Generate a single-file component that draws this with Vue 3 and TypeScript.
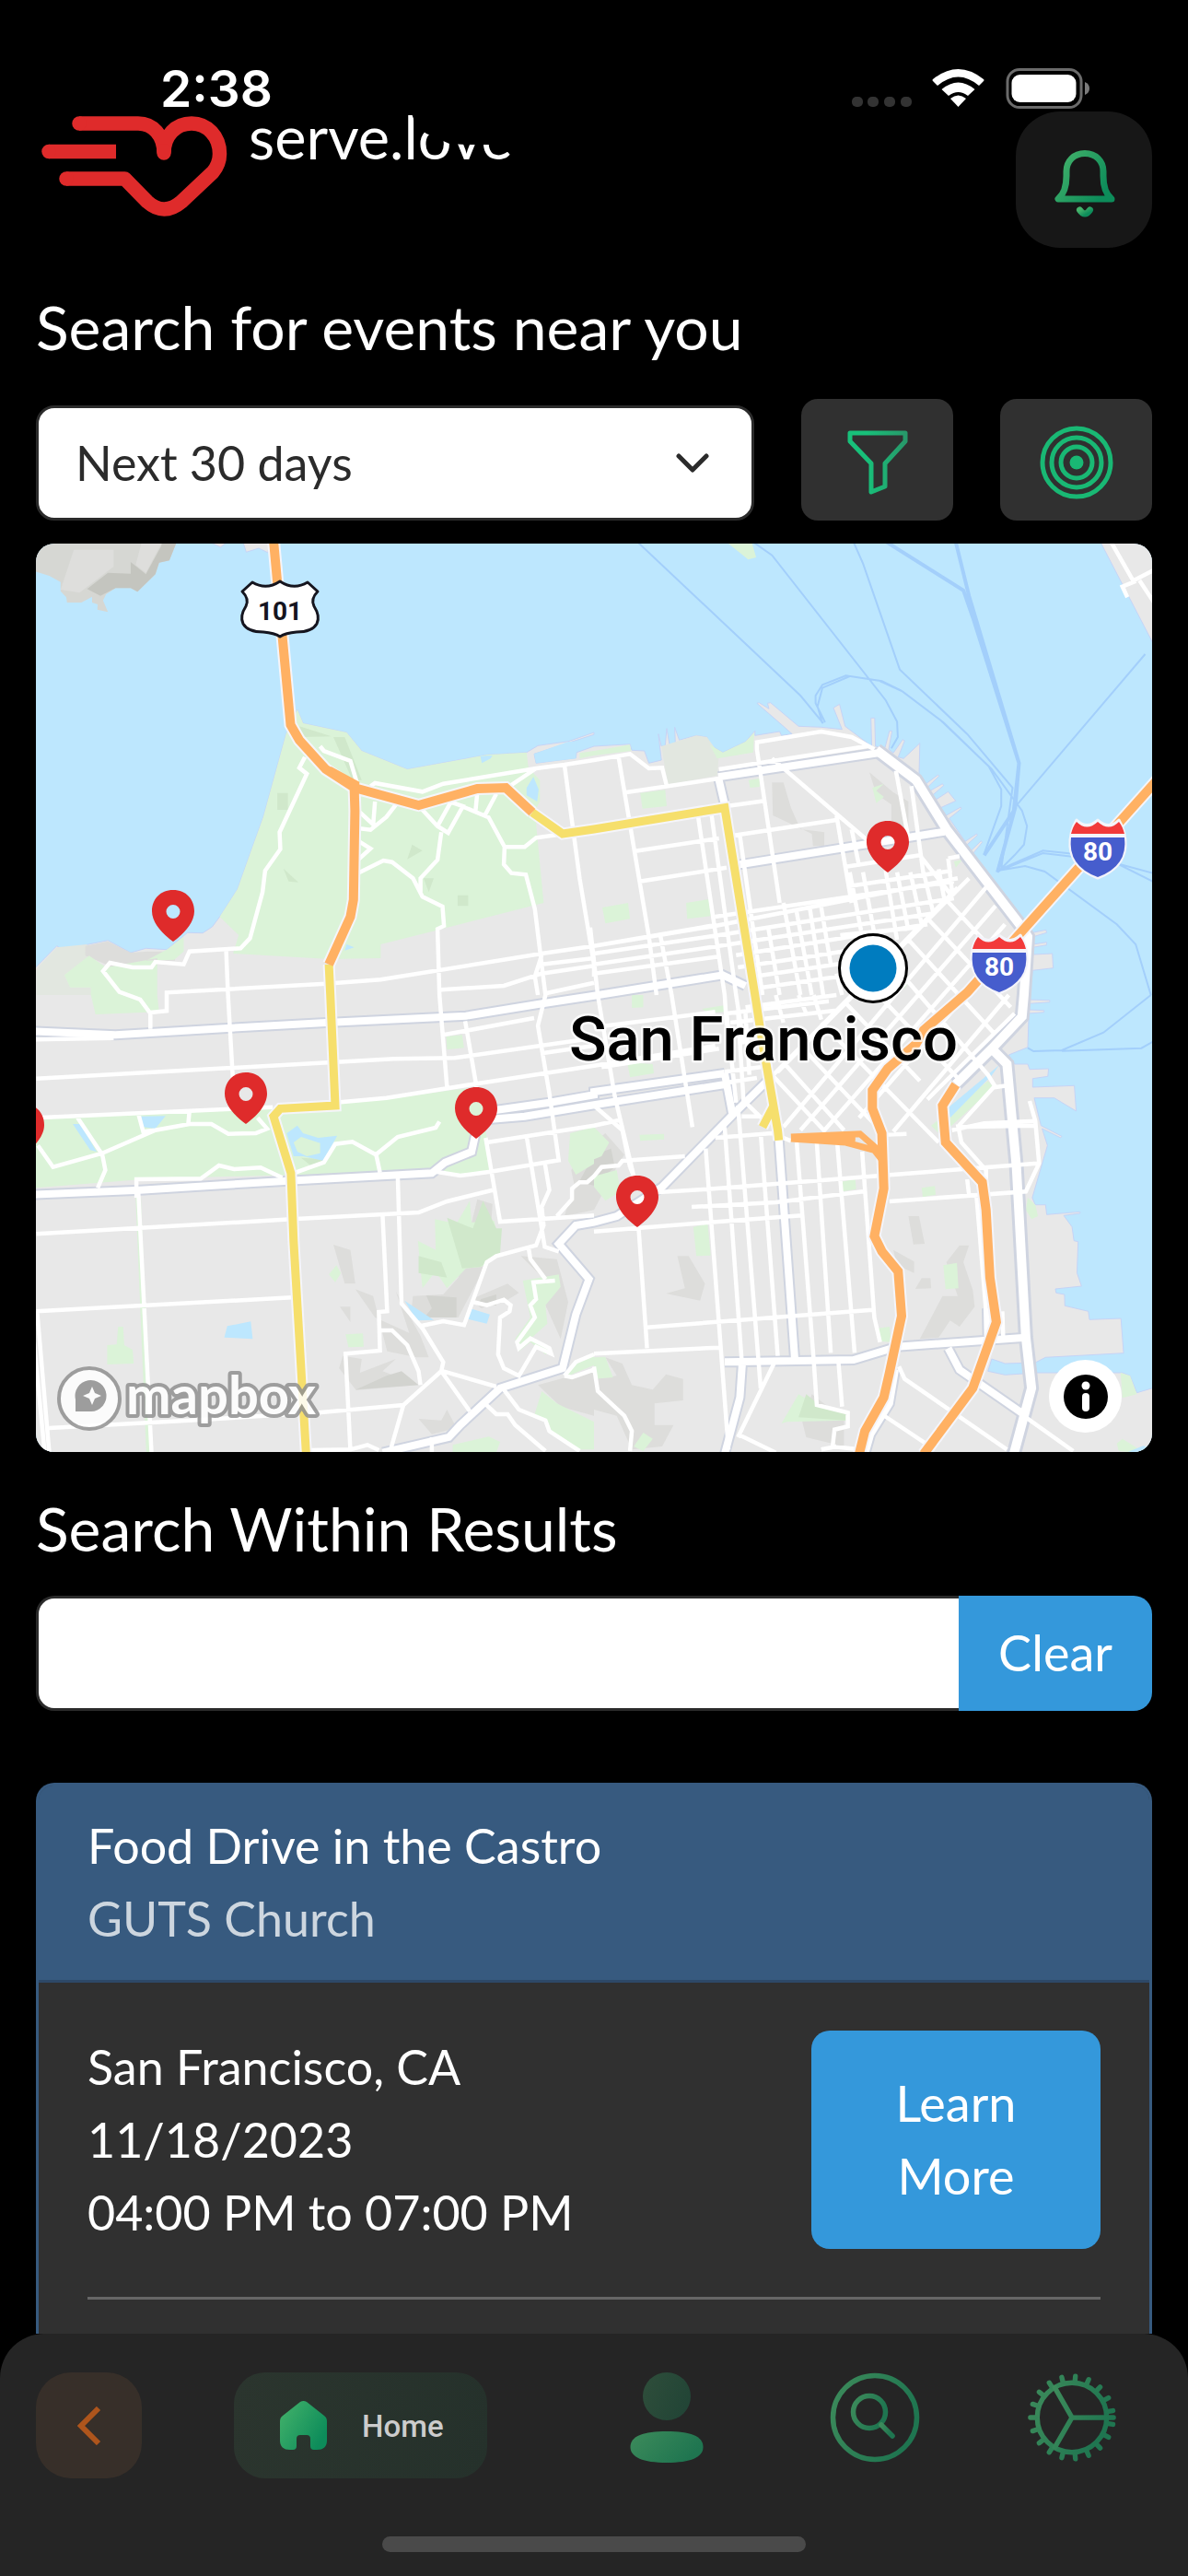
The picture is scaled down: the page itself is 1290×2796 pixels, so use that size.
<script setup lang="ts">
import { ref } from 'vue'

type Sheet = 'nw' | 'ne' | 'sw' | 'se'

// The street data is kept on four survey sheets; each has its own origin.
const sheetOrigin: Record<Sheet, [number, number]> = {
  nw: [0, 0],
  ne: [1568, 0],
  sw: [0, 1500],
  se: [1568, 1500],
}

function trace(data: string): string {
  let origin = sheetOrigin.nw
  const points: string[] = []
  for (const token of data.split(' ')) {
    if (token in sheetOrigin) {
      origin = sheetOrigin[token as Sheet]
      continue
    }
    const [x, y] = token.split(',').map(Number)
    const px = Math.round((x + origin[0]) * 4.1135 - 390) / 10
    const py = Math.round((y + origin[1]) * 3.3333 - 100) / 10
    points.push(`${px} ${py}`)
  }
  return 'M' + points.join('L')
}

const lines = (items: string[]): string => items.map(trace).join('')
const areas = (items: string[]): string => items.map((i) => trace(i) + 'Z').join('')

const land = areas([
  'nw 90,1415 150,1340 165,1352 285,1322 345,1362 385,1348 440,1352 495,1297 535,1298 560,1278 580,1245 627,1155 660,1040 695,920 755,650 785,570 800,615 915,645 955,705 1075,765 1285,718 1390,710 1420,688 1500,674 1568,645 1568,652 1410,715 1415,745 1520,728 1522,710 ne 0,690 95,683 100,703 133,705 145,745 178,735 170,650 178,690 188,688 192,632 200,690 215,687 213,628 225,670 270,655 298,660 305,685 340,710 400,675 425,640 425,655 490,642 495,655 523,650 500,625 430,550 436,548 462,568 458,550 466,548 540,625 600,628 655,635 632,565 648,553 663,625 733,690 731,598 741,598 743,690 768,695 780,640 787,640 778,700 790,712 815,668 820,672 803,725 817,730 860,680 858,795 868,820 908,783 911,787 875,830 880,840 920,812 923,818 888,855 905,862 935,838 955,868 915,890 930,915 968,888 970,893 938,925 980,1000 1010,975 1012,980 985,1010 995,1030 1022,998 1025,1003 1000,1040 1140,1270 1145,1300 1193,1288 1195,1297 1155,1312 1158,1335 1195,1328 1195,1337 1158,1345 1160,1368 1210,1365 1212,1412 1158,1420 1150,1500 se 1150,15 1203,17 1203,23 1150,28 1150,48 1188,50 1188,56 1148,60 1145,170 1095,195 1110,225 1145,225 1150,242 1200,240 1198,265 1158,272 1158,300 1268,295 1273,378 1215,335 1162,335 1180,425 1235,460 1232,465 1183,435 1197,490 1157,660 1165,683 1192,683 1195,715 1283,706 1283,711 1240,718 1262,755 1267,800 1278,803 1275,905 1287,948 1218,957 1220,970 1242,975 1243,1012 1305,1030 1308,1057 1391,1053 1398,1166 1192,1180 1165,1197 1085,1200 1050,1185 1040,1225 1085,1237 1170,1230 1395,1230 1415,1240 1433,1295 1480,1278 1480,1500 sw 90,1500',
  'ne 1335,20 1480,20 1480,365',
  'nw 640,20 710,20 708,60 683,45 650,58',
  'nw 545,20 605,20 582,42',
])
const headland = areas([
  'nw 90,20 468,20 447,85 420,92 410,130 363,187 345,175 305,175 280,195 272,215 285,253 257,245 258,228 243,222 243,203 215,222 177,222 175,205 160,185 160,155 130,135 90,120',
])
const headlandLight = areas(['nw 195,50 300,50 300,105 210,190 160,180', 'nw 375,20 430,20 385,125 358,100'])
const headlandDark = areas([
  'nw 285,125 345,128 345,90 385,130 425,40 430,20 468,20 447,85 420,92 410,130 363,187 345,175 305,175 265,200 230,178',
])
const coastShade = areas([
  'nw 96,1415 150,1345 230,1335 230,1380 170,1435 185,1475 240,1475 245,1500 96,1500',
  'ne 178,690 270,655 298,660 330,715 325,785 195,815',
])
const parks = areas([
  'nw 755,650 785,570 800,615 915,645 955,705 1075,765 1285,718 1390,710 1395,760 1425,800 1425,870 1412,900 1435,1200 1150,1290 1005,1335 1005,1380 870,1383 615,1365 630,1305 580,1245 627,1155 660,1040 695,920',
  'nw 170,1435 235,1372 280,1410 415,1380 415,1500 sw 420,55 252,63 nw 240,1500 240,1475 185,1475',
  'nw 385,1388 460,1385 485,1358 485,1310 440,1352',
  'sw 90,400 500,378 720,365 885,350 1020,340 1200,308 1270,300 1285,470 1295,570 1215,585 1150,575 1000,578 400,598 90,628',
  'nw 1530,712 1568,705 ne 95,685 98,705 0,720 nw 1530,730',
  'ne 305,685 340,710 400,675 423,645 420,710 325,730',
  'ne 122,842 188,832 192,885 128,893',
  'ne 22,1215 90,1200 95,1252 30,1267',
  'ne 243,1200 303,1188 308,1243 246,1252',
  'ne 408,800 437,795 437,822 412,825',
  'ne 735,825 765,812 745,835 765,855 745,875',
  'ne 345,20 415,20 428,75 407,82',
  'ne 950,1065 972,1060 955,1085',
  'ne 790,1440 840,1440 820,1480',
  'sw 1178,135 1220,130 1225,172 1180,178',
  'sw 1505,450 1568,430 1568,550 1520,585 1500,540',
  'sw 358,660 372,660 400,1490 386,1490',
  'sw 283,1140 308,1138 312,1080 325,1080 328,1140 350,1155 353,1200 283,1203',
  'sw 868,910 888,880 900,905 885,935',
  'sw 912,1105 958,1102 960,1145 920,1147',
  'sw 1148,730 1205,745 1240,670 1245,740 1305,735 1318,850 1270,885 1230,890 1180,955 1150,900 1115,955 1103,800 1150,830',
  'sw 1380,930 1475,910 1480,950 1440,1010 1445,1070 1400,1120 1460,1160 1440,1170 1400,1130 1370,1160 1360,1120 1400,1050',
  'sw 1410,1370 1430,1290 1470,1330 1568,1390 1568,1480 1530,1480 1450,1420 1440,1380',
  'sw 1490,1245 1520,1200 1568,1170 1568,1205',
  'sw 1195,1465 1290,1438 1320,1455 1310,1490 1195,1490',
  'se 0,430 40,480 20,525 -40,555',
  'se 0,590 60,570 70,640 30,670 0,625',
  'se 262,755 300,745 308,848 270,850',
  'se 652,608 690,600 692,632 655,640',
  'se 865,628 900,622 902,650 868,658',
  'se 922,880 958,872 962,955 928,958',
  'se 1145,660 1165,683 1172,720 1155,730 1140,700',
  'se 750,1085 780,1080 785,1130 758,1128',
  'se 495,1395 540,1300 580,1330 665,1360 665,1385 510,1390',
  'se 0,1180 30,1178 50,1245 0,1250',
  'se 105,1470 130,1425 155,1445 130,1485',
  'se 1390,1230 1415,1240 1433,1300 1395,1312',
  'se 1380,1460 1395,1445 1440,1480 1430,1490 1385,1485',
  'se 120,455 185,452 185,470 122,475',
  'se 88,220 155,225 158,255 95,268',
  'se 100,0 130,0 130,40 100,42',
  'se 285,45 350,32 350,55 300,58',
  'se 890,425 1040,280 1055,300 940,430 910,450',
])
const parkShade = areas([
  'nw 790,625 875,658 800,660',
  'nw 880,660 910,660 955,800 930,800',
  'nw 732,842 760,842 760,897 732,897',
  'nw 1088,1010 1115,1030 1075,1058',
  'nw 748,1088 788,1133 762,1130',
  'nw 1118,1120 1145,1120 1132,1165',
  'nw 1208,1175 1236,1175 1236,1210 1208,1210',
  'sw 1180,725 1248,760 1275,670 1310,760 1325,760 1320,840 1268,885 1220,890',
  'sw 1105,850 1165,870 1180,920 1105,905',
  'sw 795,530 865,535 820,555',
  'se 540,1375 560,1300 590,1330 665,1360 665,1385',
])
const hillShade = areas([
  'sw 1260,665 1300,680 1290,860 1210,1050 1085,1040 1090,980 1170,975 1210,920',
  'sw 880,813 925,830 938,940 910,940',
  'sw 938,958 985,980 1022,1160 1100,1180 1132,1180 1110,1110 1045,965 1080,1100 990,1050',
  'sw 897,1015 925,1015 925,1065',
  'sw 905,1175 955,1185 950,1230 1045,1185 1010,1225 1105,1270 940,1287 895,1215',
  'sw 1245,990 1340,940 1370,970 1330,1000 1270,1020',
  'sw 1375,850 1470,860 1500,1000 1480,1120 1440,1010 1440,930',
  'sw 1490,720 1510,640 1568,600 1568,700',
  'sw 1105,1380 1165,1385 1180,1350 1205,1410 1140,1430',
  'sw 1420,1270 1568,1220 1568,1370 1480,1340',
  'se -60,570 0,480 30,450 80,520 60,560 0,700 -40,690',
  'se 220,850 250,850 293,940 280,995 190,972 240,955',
  'se 830,720 858,720 873,810 843,812',
  'se 790,830 845,868 845,905 800,880',
  'se 865,922 888,922 890,955 848,957',
  'se 860,1120 920,980 960,980 930,870 965,815 990,815 975,870 1000,960 1005,1015 965,1080 940,1060 910,1115',
  'se 30,1180 75,1200 100,1270 155,1285 190,1235 235,1250 235,1320 160,1330 160,1400 210,1400 180,1470 100,1480 60,1370 0,1350 0,1250 60,1240',
  'se 550,1390 575,1300 660,1380 660,1470 560,1440',
  'ne 470,808 500,808 520,890 545,960 608,970 608,1015 578,1015 575,975 472,915',
  'ne 727,775 790,840 830,870 830,990 785,945 785,880 745,845',
  'nw 225,1340 285,1325 345,1362 390,1358 462,1358 462,1388 390,1388 330,1430 280,1400 225,1372',
])
const hillShadeDark = areas([
  'sw 1125,978 1205,985 1205,1050 1120,1050 1140,1020',
  'sw 1020,1240 1060,1225 1105,1270 940,1285',
  'sw 1270,990 1310,975 1310,1010 1260,1010',
  'se 0,520 45,500 55,560 0,620 -40,610',
])
const ponds = areas([
  'sw 372,395 437,394 410,435 378,430',
  'sw 192,420 212,420 255,510 238,505',
  'sw 757,450 785,425 800,450 840,465 890,458 855,540 800,525 775,525',
  'sw 600,1078 662,1063 667,1120 592,1115',
  'sw 1068,995 1145,1058 1100,1060',
  'sw 1240,1020 1293,1040 1285,1070 1235,1055',
  'nw 1408,790 1422,830 1418,870 1390,850 1390,825',
  'nw 915,1335 935,1345 910,1355',
  'nw 1410,715 1500,675 1520,675 1520,730 1415,745',
  'nw 1268,722 1300,720 1295,730 1272,745',
  'se 1070,228 932,370 940,400 1050,262',
  'se 1410,1487 1450,1468 1480,1480 1480,1495',
])
const pondIsland = areas(['sw 775,480 795,462 845,482 845,515 810,525 785,510'])

const ferries = lines([
  'ne 115,25 545,525 605,615',
  'ne 420,25 470,68 770,540 800,610 802,660 785,697',
  'ne 685,25 710,95 807,440 985,650 1105,825 1075,1090',
  'ne 610,612 585,550 585,525 603,490 665,460 760,478 810,508 915,605 1042,755 1075,830 1075,885 1030,1040',
  'ne 603,615 590,560 603,500 675,462',
  'ne 755,478 815,512 922,612 1050,765 1130,900 1143,950 1135,1010 1110,1045 1065,1100',
  'ne 1455,390 1110,890 1065,1095',
  'ne 1065,1095 1185,1030 1300,1045 1480,1105',
  'ne 1070,1095 1185,1038 1370,1065 1480,1133',
  'ne 1065,1095 1138,1080 1190,1098 1380,1270 1430,1335 1470,1500',
  'se 1470,0 1345,122 1235,180 1160,183 1145,172',
  'se 1235,182 1445,173 1475,152',
])
const ferriesWide = lines([
  'ne 772,25 975,182 1000,270 1122,745 1108,900 1030,1045',
  'ne 955,25 990,200 1122,745 1112,890 1065,1100',
])

const streets = lines([
  // Treasure Island
  'ne 1365,25 1425,155 1395,170 1408,205', 'ne 1425,150 1480,115', 'ne 1440,150 1480,225',
  // Presidio and the Richmond
  'nw 845,690 855,705 925,738 945,820', 'nw 805,725 790,760 810,780 738,970 740,1025 700,1095 693,1165 660,1315 635,1348 500,1358 485,1400 410,1392 400,1410 350,1410 290,1395 272,1422 315,1490 sw 370,15 397,60 397,110',
  'nw 978,820 990,810 1115,838 1170,812 1415,762 1490,750 1568,735 ne 95,715 145,762 180,760 192,820',
  'nw 1345,820 1415,762', 'nw 990,870 985,945 950,905', 'nw 1045,880 1020,920 978,962 950,958', 'nw 948,1000 978,1023 945,1060',
  'nw 1110,890 1155,950 1183,972 1222,885 1190,872 1155,950', 'nw 1190,870 1290,922 1332,1018 1330,1075 1350,1103 1388,1108 1412,1220 1440,1500 sw 1420,100 1450,320 1475,538 1295,575 1215,588 1150,575',
  'nw 1260,840 1255,905', 'nw 1310,845 1280,915', 'nw 1332,1018 1385,1018 1415,988 1490,975',
  'nw 945,1103 1012,1062 1035,1067 1090,1120 1115,1180 1168,1212 1172,1275 1155,1285 1160,1500 sw 1180,300',
  'nw 1165,970 1155,1060 1110,1120 1110,1165',
  'nw 1490,750 1530,1120 1568,1400 sw 1568,-60', 'nw 597,1358 602,1500 sw 615,280',
  'sw 397,57 440,52 nw 440,1492 860,1463 1005,1450 1430,1365 1568,1340 ne 320,1275 960,1120',
  'nw 1165,1483 1330,1470 1430,1430 1568,1405', 'nw 1430,1400 1568,1380', 'nw 1430,1370 1412,1440 1420,1500', 'nw 1440,1495 1568,1460',
  'sw 90,145 300,140', 'sw 96,272 600,238 1040,208 1200,205 1568,140', 'sw 1170,130 1410,75', 'sw 1228,85 1258,300', 'sw 1430,190 1568,165',
  'sw 96,400 720,365', 'sw 885,350 1020,335 1250,290 1568,230 se 320,165',
  // Golden Gate Park
  'sw 205,400 270,520 278,570 258,628', 'sw 365,385 378,445 410,440', 'sw 100,490 140,560 270,515 410,440 500,420 558,420 603,452 675,450 705,435 680,400', 'sw 500,378 497,420',
  'sw 360,660 360,600 530,598 578,555 618,567 688,562 745,595', 'sw 775,580 855,545 885,485 930,478 992,520 1050,462 1150,432 1160,412', 'sw 992,515 1003,578',
  // Sunset
  'sw 96,778 770,730 1105,708 1180,672 1300,635', 'sw 96,1030 770,985', 'sw 365,635 400,1490', 'sw 98,1030 130,1490', 'sw 90,1130 118,1490', 'sw 130,1410 500,1385 840,1360 1065,1335',
  'sw 1050,590 1060,1005 1115,1085 1170,1195 1165,1225 1065,1335 1030,1485', 'sw 1010,720 1022,1030 1000,1032 1003,1158 912,1168 925,1485', 'sw 820,1482 925,1480 970,1465 1000,1482',
  'sw 1003,1092 1035,1092 1075,1140 1105,1225 1110,1270', 'sw 1110,1078 1170,1062 1225,1075 1285,870 1310,850 1415,815 1435,750 1430,690 1450,635 1438,545',
  'sw 1250,1000 1285,1010 1330,992 1348,1010 1345,1030 1320,1050 1315,1170 1330,1215 1370,1240 1415,1145 1455,1168 1450,1150 1400,1118 1370,1150 1365,1130 1412,1050 1400,1010 1415,990 1408,935 1465,930',
  'sw 1395,820 1400,860 1440,925', 'sw 1390,460 1438,820 1475,835', 'sw 1282,465 1320,738 1568,718', 'sw 1285,480 1568,425 se 65,408',
  'sw 1170,1225 1310,1275', 'sw 1165,1225 1240,1355', 'sw 1280,1330 1310,1365 1340,1365 1360,1400 1440,1485', 'sw 1330,1285 1370,1350 1440,1385 1450,1420 1530,1485', 'sw 1140,1440 1140,1490',
  'sw 1490,1240 1510,1245 1568,1220', 'sw 1490,1240 1520,1195 1568,1170', 'sw 1470,720 1510,665 1510,630 1530,610 1550,610 1568,590 se 20,560 65,555 75,540 240,525',
  // Marina and Russian Hill
  'ne 65,725 145,1310 165,1500', 'ne 85,840 330,795', 'ne 105,1032 330,990', 'ne 120,1130 350,1085', 'ne 430,680 430,700 490,1200', 'ne 425,678 600,642 680,660 740,700', 'ne 330,765 720,690', 'ne 470,730 735,1010',
  'ne 350,885 450,868', 'ne 370,980 640,930', 'ne 640,915 680,1200', 'ne 680,960 700,1080', 'ne 797,770 830,990', 'ne 838,820 870,1110', 'ne 665,1082 860,1045', 'ne 675,1145 945,1095', 'ne 860,1045 940,1170', 'ne 935,1055 945,1160', 'ne 935,1055 965,1048',
  'ne 275,920 345,1500', 'ne 310,910 375,1500 se 395,160', 'ne 385,980 445,1500', 'ne 175,1305 205,1500 se 260,430', 'ne -10,1280 10,1500 se 55,330 105,590',
  // Downtown grid
  'ne 0,1340 320,1272', 'ne 0,1365 330,1305 950,1185', 'ne 0,1400 330,1340 890,1235', 'ne 320,1245 950,1130', 'ne 375,1370 880,1270', 'ne 0,1430 330,1375', 'ne 380,1410 700,1350', 'ne 420,1440 720,1385', 'ne 420,1480 700,1430', 'ne 650,1305 850,1280',
  'ne 500,1200 545,1500', 'ne 535,1230 575,1500', 'ne 570,1220 605,1500', 'ne 600,1215 625,1400', 'ne 675,1100 705,1290', 'ne 710,1100 740,1300', 'ne 770,1095 800,1320', 'ne 800,1100 830,1290', 'ne 835,1100 865,1270', 'ne 870,1100 895,1230', 'ne 910,1090 925,1190', 'ne 460,1280 490,1500', 'ne 640,1430 655,1500',
  'se 0,105 320,55', 'se 350,60 620,20', 'se 360,90 640,50', 'se 400,40 640,0', 'se 20,235 330,175', 'se 345,250 440,235', 'se 350,285 430,270',
  'se 350,60 375,350', 'se 380,50 395,350', 'se 400,60 410,260', 'se 345,0 350,100', 'se 480,0 500,90', 'se 540,0 560,60', 'se 580,0 600,80',
  // South of Market
  'se 960,-350 465,270', 'se 990,-380 485,250', 'se 1035,-350 500,430', 'se 1060,-290 545,440', 'se 1085,-230 605,445', 'se 1110,-180 700,400', 'se 1095,0 790,445', 'se 1110,60 880,340',
  'se 930,-310 1110,-70', 'se 880,-250 1100,40', 'se 830,-180 1060,130', 'se 780,-115 1040,260 1060,300 1090,295', 'se 720,-40 960,270', 'se 660,20 860,280', 'se 600,90 910,480', 'se 545,165 740,420', 'se 500,220 660,440', 'se 470,260 610,445',
  // Mission
  'se 320,465 470,450 490,460 520,475', 'se 390,395 440,395', 'se 380,360 440,1280', 'se 400,350 450,410', 'se 440,450 485,1175', 'se 295,500 355,1480', 'se 345,430 390,1190', 'se 535,480 580,1190 588,1335 670,1360 670,1405 635,1415 630,1470 690,1478', 'se 588,480 625,1165', 'se 642,480 688,1165', 'se 708,510 740,1050 755,1130', 'se 760,455 825,452',
  'se 170,642 300,632 1170,548', 'se 258,690 480,675 710,640', 'se 0,770 305,740 548,718', 'se 780,672 1140,640 1175,548 1165,410 1150,345', 'se 140,1082 735,1025', 'se 118,760 140,1150', 'se 0,1168 330,1148', 'se 95,560 105,590', 'se 0,360 75,440 95,560',
  'se 645,1190 655,1340', 'se 475,1200 380,1440', 'se 380,1430 480,1490', 'se 0,1210 10,1290 80,1370 100,1420 95,1485', 'se 600,1480 640,1470',
  // Potrero and Mission Bay
  'se 945,440 1030,418 1165,410', 'se 960,430 1165,425', 'se 960,420 970,480 1035,570 1035,620', 'se 985,600 990,650 1010,655', 'se 1055,300 960,430', 'se 1010,660 1035,1030', 'se 1078,1030 1080,1110', 'se 805,1210 820,1250 1090,1480', 'se 760,1365 900,1480', 'se 1140,1375 1265,1485',
])
const avenues = lines([
  'sw 90,118 305,130 600,108 860,90 1230,68 1420,30 1568,2 ne 340,1435 400,1470',
  'sw 90,650 370,635 760,605 1140,580 1175,545 1245,510 1255,455',
  'sw 1290,378 1450,350 1568,325 se 0,315 345,255', 'sw 1290,405 1385,395 1568,358 se 350,290', 'se 345,255 365,385',
  'se 465,270 370,385 180,625 60,720 0,740 sw 1520,750 1475,810 1555,925 1520,1040 1485,1215 1320,1280 1215,1400 1185,1440 1010,1490',
  'ne 328,790 345,880', 'ne 328,790 750,712', 'ne 385,1075 925,968',
  'se 488,470 530,1185', 'se 345,1195 685,1188 800,1145 1140,1115', 'se 392,1190 385,1310 345,1495',
  'se 935,1150 965,1220 1140,1370', 'se 1038,1020 1040,1130', 'se 795,1220 780,1330 730,1430 715,1495',
])
const embarcadero = lines([
  'ne 745,702 850,800 930,960 1130,1280 1145,1310 1135,1500 se 1130,70 1050,175 955,290',
  'se 1050,175 1090,225 1115,560 1140,1115 1155,1280 1108,1495',
])
const highways = lines([
  'nw 722,20 745,330 767,620 790,670 860,765 935,825 1105,882 1260,828 1335,825 1405,905',
  'nw 935,825 937,900 933,1190 925,1245 868,1400',
  'ne 1490,795 985,1492 se 870,115 850,160 775,240 735,310 735,370 760,450 765,630 740,785 760,835 803,900 812,1045 780,1230 765,1310 715,1420 700,1495',
  'se 955,292 920,360 928,480 1025,610 1035,700 1045,920 1062,1065 1000,1280 870,1495',
])
const ramps = lines([
  'nw 870,765 940,812 937,860', 'se 520,462 702,452 760,515', 'se 520,468 665,480 740,505 765,545', 'se 530,465 690,466',
])
const boulevards = lines([
  'nw 1405,905 1485,975 1568,960 ne 345,890 425,1500 se 440,120 485,440 488,473',
  'se 472,365 445,430',
  'nw 868,1400 872,1500 sw 885,360 740,370 722,395 768,580 775,800 808,1495',
])

const pins = [
  { x: 149, y: 376 },
  { x: 925, y: 301 },
  { x: 228, y: 574 },
  { x: 478, y: 590 },
  { x: 653, y: 686 },
  { x: -14, y: 608 },
]
const interstates = [
  { x: 1153, y: 331 },
  { x: 1046, y: 456 },
]

const gearTeeth = Array.from({ length: 19 }, (_, i) => {
  const a = Math.PI + (i * 2 * Math.PI) / 19
  const at = (r: number) => `${(50 + r * Math.cos(a)).toFixed(1)} ${(50 + r * Math.sin(a)).toFixed(1)}`
  return `M${at(41)}L${at(46)}`
}).join('')

const range = ref('30')
const query = ref('')
</script>

<template>
  <div class="app">
    <div class="status">
      <span class="clock">2:38</span>
      <svg class="signals" viewBox="0 0 260 46" aria-hidden="true">
        <g fill="#333">
          <rect x="0" y="32" width="12" height="11" rx="5" />
          <rect x="17" y="32" width="12" height="11" rx="5" />
          <rect x="35" y="32" width="12" height="11" rx="5" />
          <rect x="53" y="32" width="12" height="11" rx="5" />
        </g>
        <g fill="#fff">
          <path d="M88 13Q115.500-9 143 13Q144 14 143 15L138 20Q115.500 1 93 20L88 15Q87 14 88 13Z" />
          <path d="M97.500 24Q115.500 9 133.500 24L126 31Q115.500 23 105 31Z" />
          <path d="M107 34Q115.500 27 124 34L115.500 43Z" />
          <rect x="173.500" y="8" width="70" height="30" rx="9" />
        </g>
        <rect x="169" y="2.500" width="80" height="41" rx="13" fill="none" stroke="#6b6b6b" stroke-width="3" />
        <path d="M253 16Q258 18 258 23Q258 28 253 30Z" fill="#7a7a7a" />
      </svg>
    </div>

    <header class="top">
      <a class="brand" href="#" aria-label="serve.love">
        <svg class="logo" viewBox="0 0 202 111" aria-hidden="true">
          <g fill="none" stroke="#df2b2b" stroke-width="15.500" stroke-linejoin="round">
            <path d="M41 9H105C121 9 133 22 133 41C133 22 146 9 163 9C180 9 193.500 23 193.500 42C193.500 50 191 56 186 62L152 94Q133 110 115 94L90.500 69H27" />
            <path d="M8 39.500H81" />
          </g>
          <g fill="#df2b2b">
            <circle cx="41" cy="9" r="7.750" />
            <circle cx="27" cy="69" r="7.750" />
            <circle cx="8" cy="39.500" r="7.750" />
            <circle cx="133" cy="39" r="7.750" />
          </g>
        </svg>
        <span class="wordmark">serve.love</span>
      </a>
      <button class="bell" type="button" aria-label="Notifications">
        <svg viewBox="0 0 68 76" aria-hidden="true">
          <defs>
            <linearGradient id="leaf" x1="0" y1="0" x2="1" y2="0.6">
              <stop offset="0" stop-color="#45b36b" />
              <stop offset="1" stop-color="#0d8c5a" />
            </linearGradient>
          </defs>
          <path d="M34 4.500C22 4.500 14 13 14 24V29C14 40 11 49 5 54H63C57 49 54 40 54 29V24C54 13 46 4.500 34 4.500Z" fill="none" stroke="url(#leaf)" stroke-width="7" stroke-linejoin="round" />
          <path d="M28.500 66Q34 74 39.500 66" fill="none" stroke="url(#leaf)" stroke-width="7" stroke-linecap="round" />
        </svg>
      </button>
    </header>

    <main class="content">
      <h1 class="title"><label for="range">Search for events near you</label></h1>
      <div class="filters">
        <div class="picker">
          <select id="range" v-model="range">
            <option value="30">Next 30 days</option>
            <option value="60">Next 60 days</option>
          </select>
          <svg class="caret" viewBox="0 0 36 22" aria-hidden="true">
            <path d="M3 3L18 18L33 3" fill="none" stroke="#2b2b2b" stroke-width="5" stroke-linecap="round" stroke-linejoin="round" />
          </svg>
        </div>
        <button class="tool" type="button" aria-label="Filter">
          <svg viewBox="0 0 66 70" aria-hidden="true">
            <defs>
              <linearGradient id="mint" x1="0" y1="0" x2="1" y2="0">
                <stop offset="0.3" stop-color="#18c07a" />
                <stop offset="1" stop-color="#27996a" />
              </linearGradient>
            </defs>
            <path d="M3 3H63V12L41 36V61L26 67V36L3 12Z" fill="none" stroke="url(#mint)" stroke-width="5" stroke-linejoin="round" />
          </svg>
        </button>
        <button class="tool" type="button" aria-label="Near me">
          <svg class="target" viewBox="0 0 80 80" aria-hidden="true">
            <g fill="none" stroke="#19b874" stroke-width="5">
              <circle cx="40" cy="40" r="37" />
              <circle cx="40" cy="40" r="27" />
              <circle cx="40" cy="40" r="17" />
            </g>
            <circle cx="40" cy="40" r="7.500" fill="#19b874" />
          </svg>
        </button>
      </div>

      <div class="map">
        <svg class="chart" viewBox="0 0 1212 986" role="img" aria-label="Map of San Francisco">
          <rect width="1212" height="986" fill="#bde7fe" />
          <path :d="ferries" class="ferry" />
          <path :d="ferriesWide" class="ferry wide" />
          <path :d="land" fill="#e8e8e8" stroke="#c5d4f7" stroke-width="1" />
          <path :d="headland" fill="#d6d7d3" />
          <path :d="headlandDark" fill="#c4c5bf" />
          <path :d="headlandLight" fill="#dededc" />
          <path :d="coastShade" fill="#e2e7e0" />
          <path :d="hillShade" fill="#dddddb" />
          <path :d="hillShadeDark" fill="#d2d3cf" />
          <path :d="parks" fill="#dbf3d8" />
          <path :d="parkShade" fill="#d0e8cb" />
          <path :d="ponds" fill="#bde7fe" />
          <path :d="pondIsland" fill="#dbf3d8" />
          <path :d="avenues" class="road" stroke="#cfd4e0" stroke-width="12" />
          <path :d="embarcadero" class="road" stroke="#cfd4e0" stroke-width="16" />
          <path :d="streets" class="road" stroke="#fff" stroke-width="4.500" />
          <path :d="avenues" class="road" stroke="#fff" stroke-width="8" />
          <path :d="embarcadero" class="road" stroke="#fff" stroke-width="10" />
          <path :d="boulevards" class="road" stroke="#f5f5fa" stroke-width="13" />
          <path :d="highways" class="road" stroke="#f5f5fa" stroke-width="14" />
          <path :d="boulevards" class="road" stroke="#f6df6c" stroke-width="9" />
          <path :d="highways" class="road" stroke="#ffb163" stroke-width="10" />
          <path :d="ramps" class="road" stroke="#ffb163" stroke-width="7" />

          <g transform="translate(265 71)">
            <path d="M-30-29Q-15-20 0-30Q15-20 30-29L41-19Q33-11 37-3Q44 8 40 16Q35 25 18 25Q6 26 0 30Q-6 26-18 25Q-35 25-40 16Q-44 8-37-3Q-33-11-41-19Z" fill="#fff" stroke="#15151f" stroke-width="3" stroke-linejoin="round" />
            <text class="shield-no" x="0" y="12" fill="#15151f">101</text>
          </g>
          <g v-for="s in interstates" :key="s.x" :transform="`translate(${s.x} ${s.y})`">
            <path d="M-23-31Q-12-20 0-31Q12-20 23-31Q31-18 30-2Q28 21 0 32Q-28 21-30-2Q-31-18-23-31Z" fill="#f4f4fa" stroke="#f4f4fa" stroke-width="3" stroke-linejoin="round" />
            <path d="M-23-29Q-12-18 0-29Q12-18 23-29Q27-24 29-16H-29Q-27-24-23-29Z" fill="#f23a3a" />
            <path d="M-29-12H29Q33 19 0 31Q-33 19-29-12Z" fill="#465dcd" />
            <text class="shield-no" x="0" y="13" fill="#fff">80</text>
          </g>
          <circle cx="909" cy="461" r="36.500" fill="#fff" stroke="#000" stroke-width="3" />
          <circle cx="909" cy="461" r="25.500" fill="#007cbf" />
          <text class="city" x="790" y="561">San Francisco</text>
          <g v-for="p in pins" :key="p.x" :transform="`translate(${p.x} ${p.y})`">
            <path fill-rule="evenodd" d="M0 0C-14 0-23 10-23 23C-23 36-11 48 0 56C11 48 23 36 23 23C23 10 14 0 0 0ZM0 16A7.500 7.500 0 1 1 0 31A7.500 7.500 0 1 1 0 16Z" fill="#df2b2b" />
          </g>
          <g class="credit">
            <circle cx="58" cy="928" r="33" fill="#fff" stroke="#919191" stroke-width="4" />
            <path d="M43 942V929A17 17 0 1 1 60 942Z" fill="#919191" />
            <path d="M61 915L64 922L71 925L64 928L61 935L58 928L51 925L58 922Z" fill="#fff" />
            <text class="mapbox" x="98" y="945">mapbox</text>
          </g>
        </svg>
        <button class="info" type="button" aria-label="Map information">
          <svg viewBox="0 0 48 48" aria-hidden="true">
            <circle cx="24" cy="24" r="24" />
            <circle cx="24" cy="12" r="4.500" fill="#fff" />
            <rect x="20" y="20" width="8" height="20" rx="4" fill="#fff" />
          </svg>
        </button>
      </div>

      <h2 class="title"><label for="query">Search Within Results</label></h2>
      <div class="search">
        <input id="query" v-model="query" type="text" />
        <button type="button" @click="query = ''">Clear</button>
      </div>

      <article class="card">
        <header class="card-head">
          <h3>Food Drive in the Castro</h3>
          <p>GUTS Church</p>
        </header>
        <div class="card-body">
          <div class="event">
            <div class="facts">
              <p>San Francisco, CA</p>
              <p>11/18/2023</p>
              <p>04:00 PM to 07:00 PM</p>
            </div>
            <button class="learn" type="button">Learn More</button>
          </div>
          <hr />
        </div>
      </article>
    </main>

    <nav class="tabs">
      <div class="tab-row">
        <button class="back" type="button" aria-label="Back">
          <svg viewBox="0 0 26 42" aria-hidden="true">
            <path d="M23 2L4 21L23 40" fill="none" stroke="#ae551c" stroke-width="6" />
          </svg>
        </button>
        <a class="home" href="#">
          <svg viewBox="0 0 51 53" aria-hidden="true">
            <path d="M22 1Q25.500-1 29 1L48 16Q51 18 51 22V43Q51 53 40 53H37Q33 53 33 49V41Q33 37 29 37H22Q18 37 18 41V49Q18 53 14 53H11Q0 53 0 43V22Q0 18 3 16Z" fill="url(#leaf)" />
          </svg>
          <span>Home</span>
        </a>
        <div class="links">
          <a class="profile" href="#" aria-label="Profile">
            <svg viewBox="0 0 80 98" aria-hidden="true">
              <defs>
                <linearGradient id="moss" x1="0" y1="0" x2="1" y2="0.4">
                  <stop offset="0" stop-color="#3d8b5b" />
                  <stop offset="1" stop-color="#1f7550" />
                </linearGradient>
              </defs>
              <circle cx="40" cy="26" r="26" fill="url(#moss)" opacity="0.4" />
              <path d="M40 64C65 64 79.500 69 79.500 81C79.500 92 66 98 40 98C14 98 .5 92 .5 81C.5 69 15 64 40 64Z" fill="url(#moss)" />
            </svg>
          </a>
          <a href="#" aria-label="Search">
            <svg viewBox="0 0 98 98" aria-hidden="true">
              <g fill="none" stroke="url(#moss)" stroke-width="5.500" stroke-linecap="round">
                <circle cx="49" cy="49" r="45.500" />
                <circle cx="43" cy="43" r="17.500" />
                <path d="M56 57L68 69" />
              </g>
            </svg>
          </a>
          <a href="#" aria-label="Settings">
            <svg viewBox="0 0 100 100" aria-hidden="true">
              <g fill="none" stroke="url(#moss)" stroke-width="5.500" stroke-linecap="round">
                <circle cx="50" cy="50" r="38.500" />
                <path :d="gearTeeth" />
                <path d="M31 17L50 50L31 83M50 50.100L96 50" />
              </g>
            </svg>
          </a>
        </div>
      </div>
      <div class="grip"></div>
    </nav>
  </div>
</template>

<style>
body {
  margin: 0;
  background: #000;
}
</style>

<style scoped>
.app {
  display: flex;
  flex-direction: column;
  height: 100vh;
  overflow: hidden;
  background: #000;
  color: #fff;
  font-family: Lato, 'Liberation Sans', sans-serif;
  font-size: 52px;
  line-height: 79px;
}
button,
select,
input {
  margin: 0;
  padding: 0;
  border: 0;
  font: inherit;
  color: inherit;
}
button {
  display: flex;
  align-items: center;
  justify-content: center;
}
a {
  color: inherit;
  text-decoration: none;
}
svg {
  display: block;
}
h1,
h2,
h3,
p {
  margin: 0;
  font-weight: 400;
}
h3 {
  font-size: inherit;
}

.status {
  display: flex;
  justify-content: space-between;
  align-items: flex-end;
  height: 121px;
  padding: 0 105px 0 174px;
  box-sizing: border-box;
}
.clock {
  font: 600 55px/50px Inter, 'Liberation Sans', sans-serif;
}
.signals {
  width: 260px;
  height: 46px;
  margin-bottom: 2px;
}

.top {
  display: flex;
  justify-content: space-between;
  align-items: flex-start;
  padding: 0 39px 0 45px;
}
.brand {
  display: flex;
  align-items: flex-start;
  gap: 23px;
  padding-top: 4px;
}
.logo {
  width: 202px;
  height: 111px;
}
.wordmark {
  font-size: 65px;
  line-height: 46px;
  clip-path: polygon(0 -10px, 174px -10px, 182px 12px, 193px 20px, 218px 31px, 236px 32px, 110% 32px, 110% 120%, 0 120%);
}
.bell {
  width: 148px;
  height: 148px;
  padding: 10px 0 0 2px;
  border-radius: 48px;
  background: #171717;
}
.bell svg {
  width: 68px;
  height: 76px;
}

.content {
  flex: 1;
  min-height: 0;
  overflow: hidden;
  padding: 0 39px;
  display: flex;
  flex-direction: column;
}
.title {
  font-size: 66px;
  line-height: 80px;
}
h1.title {
  margin: 46px 0 38px;
}
h2.title {
  margin: 43px 0 33px;
}
.filters {
  display: flex;
  align-items: flex-end;
  gap: 51px;
  margin-bottom: 25px;
}
.picker {
  position: relative;
  flex: 1;
}
.picker select {
  appearance: none;
  display: block;
  width: 100%;
  height: 125px;
  padding: 0 40px;
  border: 3px solid #2b2b2b;
  border-radius: 20px;
  background: #fff;
  color: #2b2b2b;
}
.caret {
  position: absolute;
  top: 50%;
  right: 49px;
  width: 36px;
  margin-top: -11px;
  pointer-events: none;
}
.tool {
  width: 165px;
  height: 132px;
  padding-top: 6px;
  border-radius: 18px;
  background: #303030;
}
.tool svg {
  width: 66px;
  height: 70px;
}
.tool .target {
  width: 80px;
  height: 80px;
}

.map {
  position: relative;
  flex: none;
}
.chart {
  width: 100%;
  border-radius: 20px;
}
.ferry {
  fill: none;
  stroke: #a3cffb;
  stroke-width: 2;
}
.ferry.wide {
  stroke-width: 4;
}
.road {
  fill: none;
  stroke-linejoin: miter;
}
.shield-no {
  font: 700 28px Roboto, sans-serif;
  text-anchor: middle;
}
.city {
  font: 500 67px Roboto, sans-serif;
  text-anchor: middle;
  paint-order: stroke;
  stroke: rgba(255, 255, 255, 0.75);
  stroke-width: 5px;
  stroke-linejoin: round;
}
.credit {
  opacity: 0.85;
}
.mapbox {
  font: 700 58px Lato, sans-serif;
  fill: #fff;
  paint-order: stroke;
  stroke: #919191;
  stroke-width: 8px;
  stroke-linejoin: round;
}
.info {
  position: absolute;
  right: 33px;
  bottom: 21px;
  width: 79px;
  height: 79px;
  border-radius: 40px;
  background: #fff;
}
.info svg {
  width: 48px;
}

.search {
  display: flex;
  flex: none;
  height: 125px;
}
.search input {
  flex: 1;
  min-width: 0;
  padding: 0 40px;
  border: 3px solid #2b2b2b;
  border-right: 0;
  border-radius: 20px 0 0 20px;
  background: #fff;
  color: #2b2b2b;
}
.search button {
  width: 210px;
  padding-bottom: 2px;
  border-radius: 0 20px 20px 0;
  background: #3498db;
  font-size: 54px;
}

.card {
  flex: 1;
  margin-top: 78px;
  border: 3px solid #375a7f;
  border-bottom: 0;
  border-radius: 20px 20px 0 0;
  background: #303030;
}
.card-head {
  padding: 26px 53px 27px;
  border-bottom: 3px solid #2d4868;
  background: #375a7f;
  border-radius: 16px 16px 0 0;
}
.card-head p {
  color: #cdd6df;
}
.card-body {
  padding: 52px 53px 0;
}
.event {
  display: flex;
  justify-content: space-between;
}
.learn {
  width: 314px;
  padding: 38px 80px 40px;
  border-radius: 20px;
  background: #3498db;
  font-size: 54px;
  text-align: center;
}
hr {
  height: 3px;
  margin: 52px 0 0;
  border: 0;
  background: #666;
}

.tabs {
  flex: none;
  padding: 42px 39px 26px;
  border-radius: 48px 48px 0 0;
  background: #252525;
}
.tab-row {
  display: flex;
}
.back {
  width: 115px;
  height: 115px;
  border-radius: 38px;
  background: #372f29;
}
.back svg {
  width: 26px;
}
.home {
  display: flex;
  align-items: center;
  gap: 38px;
  width: 275px;
  height: 115px;
  margin-left: 100px;
  padding-left: 50px;
  box-sizing: border-box;
  border-radius: 34px;
  background: linear-gradient(100deg, #2b352e, #25312b);
  color: #ccc;
  font: 500 33px/44px Roboto, sans-serif;
}
.home svg {
  width: 51px;
}
.home span {
  padding-top: 3px;
}
.links {
  flex: 1;
  display: flex;
  justify-content: flex-end;
  gap: 116px;
  padding-right: 38px;
}
.profile {
  margin-right: 21px;
}
.links svg {
  height: 98px;
}
.grip {
  width: 460px;
  height: 17px;
  margin: 63px auto 0;
  border-radius: 9px;
  background: #4a4a4a;
}
</style>
